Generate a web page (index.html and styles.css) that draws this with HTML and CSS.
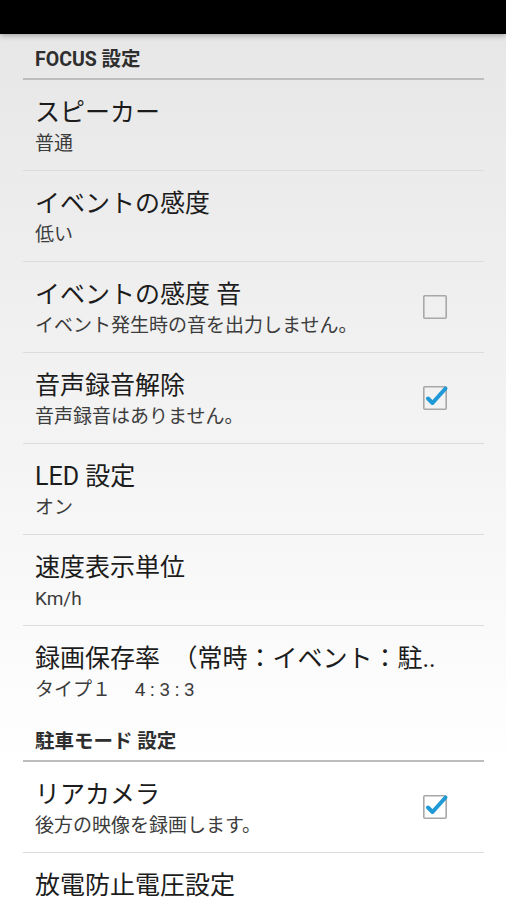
FILE: index.html
```html
<!DOCTYPE html>
<html lang="ja">
<head>
    <meta charset="UTF-8">
    <title>FOCUS 設定</title>
    <link rel="stylesheet" href="styles.css">
</head>
<body>
<div id="status"></div>
<div id="screen">
    <div class="list">
        <div class="cat">FOCUS 設定</div>

        <div class="item">
            <div class="text">
                <p class="title">スピーカー</p>
                <p class="sub">普通</p>
            </div>
        </div>
        <div class="item">
            <div class="text">
                <p class="title">イベントの感度</p>
                <p class="sub">低い</p>
            </div>
        </div>
        <div class="item">
            <div class="text">
                <p class="title">イベントの感度 音</p>
                <p class="sub">イベント発生時の音を出力しません。</p>
            </div>
            <svg class="check" width="30" height="30" viewBox="0 0 30 30">
                <rect x="3.8" y="3.8" width="22.4" height="22.4" rx="1" fill="none" stroke="#a8a8a8" stroke-width="1.6"/>
            </svg>
        </div>
        <div class="item">
            <div class="text">
                <p class="title">音声録音解除</p>
                <p class="sub">音声録音はありません。</p>
            </div>
            <svg class="check" width="30" height="30" viewBox="0 0 30 30">
                <rect x="3.8" y="3.8" width="22.4" height="22.4" rx="1" fill="none" stroke="#a8a8a8" stroke-width="1.6"/>
                <path d="M8 15.5 L12.5 20 L25.5 5.5" fill="none" stroke="#1f9ad6" stroke-width="4" stroke-linecap="round" stroke-linejoin="round"/>
            </svg>
        </div>
        <div class="item">
            <div class="text">
                <p class="title">LED 設定</p>
                <p class="sub">オン</p>
            </div>
        </div>
        <div class="item">
            <div class="text">
                <p class="title">速度表示単位</p>
                <p class="sub">Km/h</p>
            </div>
        </div>
        <div class="item last">
            <div class="text">
                <p class="title">録画保存率　（常時：イベント：駐..</p>
                <p class="sub">タイプ１　 4 : 3 : 3</p>
            </div>
        </div>

        <div class="cat">駐車モード 設定</div>

        <div class="item">
            <div class="text">
                <p class="title">リアカメラ</p>
                <p class="sub">後方の映像を録画します。</p>
            </div>
            <svg class="check" width="30" height="30" viewBox="0 0 30 30">
                <rect x="3.8" y="3.8" width="22.4" height="22.4" rx="1" fill="none" stroke="#a8a8a8" stroke-width="1.6"/>
                <path d="M8 15.5 L12.5 20 L25.5 5.5" fill="none" stroke="#1f9ad6" stroke-width="4" stroke-linecap="round" stroke-linejoin="round"/>
            </svg>
        </div>
        <div class="item">
            <div class="text">
                <p class="title">放電防止電圧設定</p>
            </div>
        </div>
    </div>
</div>
</body>
</html>
```

FILE: styles.css
```css
* {
    margin: 0;
    padding: 0;
}

html, body {
    height: 100%;
    overflow: hidden;
}

body {
    font-family: Roboto, "Noto Sans CJK JP", sans-serif;
    background: #fff;
}

#status {
    height: 34px;
    background: #000;
    position: relative;
    z-index: 2;
    box-shadow: 0 1px 6px rgba(0, 0, 0, 0.35);
}

#screen {
    height: 866px;
    background: linear-gradient(#e7e7e7, #f3f3f3 45%, #ffffff 85%);
}

.list {
    margin: 0 22px 0 23px;
}

.cat {
    height: 46px;
    padding: 3px 0 0 12px;
    box-sizing: border-box;
    display: flex;
    align-items: center;
    border-bottom: 2px solid #bdbdbd;
    font-size: 19.5px;
    font-weight: bold;
    color: #2e2e2e;
}

.item {
    height: 91px;
    box-sizing: border-box;
    padding: 17px 34px 0 12px;
    display: flex;
    align-items: flex-start;
    border-bottom: 1px solid #dcdcdc;
}

.item.last {
    height: 90px;
    border-bottom: none;
}

.text {
    flex: 1;
    min-width: 0;
}

.title {
    font-size: 25px;
    line-height: 32px;
    color: #1c1c1c;
    white-space: nowrap;
}

.sub {
    font-size: 19px;
    line-height: 30px;
    color: #3c3c3c;
    white-space: nowrap;
}

.check {
    flex: none;
    align-self: center;
    margin-top: -17px;
}
```
